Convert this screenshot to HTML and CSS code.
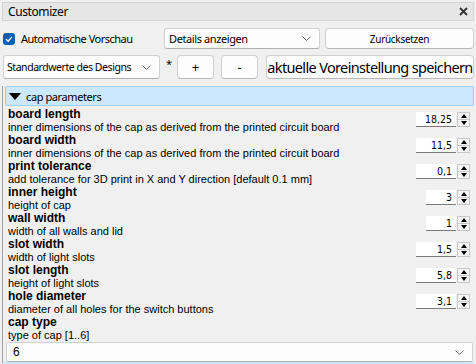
FILE: index.html
```html
<!DOCTYPE html>
<html>
<head>
<meta charset="utf-8">
<link rel="stylesheet" href="styles.css">
</head>
<body>
<div class="app">
  <div class="titlebar">
    <span class="title">Customizer</span>
    <svg class="close" width="9" height="9" viewBox="0 0 9 9"><path d="M1 1L8 8M8 1L1 8" stroke="#333" stroke-width="1.8"/></svg>
  </div>
  <div class="row1">
    <label class="check">
      <span class="box"><svg width="12" height="12" viewBox="0 0 12 12"><path d="M3 6.2L5.1 8.2L9 3.9" fill="none" stroke="#fff" stroke-width="1.3"/></svg></span>
      <span>Automatische Vorschau</span>
    </label>
    <div class="combo details"><span>Details anzeigen</span><svg class="chev" width="9" height="5" viewBox="0 0 9 5"><path d="M0.5 0.5L4.5 4.5L8.5 0.5" fill="none" stroke="#666" stroke-width="1"/></svg></div>
    <div class="btn reset">Zurücksetzen</div>
  </div>
  <div class="row2">
    <div class="combo preset"><span>Standardwerte des Designs</span><svg class="chev" width="9" height="5" viewBox="0 0 9 5"><path d="M0.5 0.5L4.5 4.5L8.5 0.5" fill="none" stroke="#666" stroke-width="1"/></svg></div>
    <span class="star">*</span>
    <div class="btn small">+</div>
    <div class="btn small">-</div>
    <div class="btn save">aktuelle Voreinstellung speichern</div>
  </div>
  <div class="group">
    <div class="header">
      <svg class="tri" width="12" height="7" viewBox="0 0 12 7"><path d="M0 0H12L6 7Z" fill="#000"/></svg>
      <span>cap parameters</span>
    </div>
    <div class="params">
      <div class="param">
        <div class="name">board length</div>
        <div class="desc">inner dimensions of the cap as derived from the printed circuit board</div>
        <div class="spin"><div class="field wide">18,25</div><div class="arrows"><span class="up"></span><span class="down"></span></div></div>
      </div>
      <div class="param">
        <div class="name">board width</div>
        <div class="desc">inner dimensions of the cap as derived from the printed circuit board</div>
        <div class="spin"><div class="field wide">11,5</div><div class="arrows"><span class="up"></span><span class="down"></span></div></div>
      </div>
      <div class="param">
        <div class="name">print tolerance</div>
        <div class="desc">add tolerance for 3D print in X and Y direction [default 0.1 mm]</div>
        <div class="spin"><div class="field wide">0,1</div><div class="arrows"><span class="up"></span><span class="down"></span></div></div>
      </div>
      <div class="param">
        <div class="name">inner height</div>
        <div class="desc">height of cap</div>
        <div class="spin"><div class="field narrow">3</div><div class="arrows"><span class="up"></span><span class="down"></span></div></div>
      </div>
      <div class="param">
        <div class="name">wall width</div>
        <div class="desc">width of all walls and lid</div>
        <div class="spin"><div class="field narrow">1</div><div class="arrows"><span class="up"></span><span class="down"></span></div></div>
      </div>
      <div class="param">
        <div class="name">slot width</div>
        <div class="desc">width of light slots</div>
        <div class="spin"><div class="field wide">1,5</div><div class="arrows"><span class="up"></span><span class="down"></span></div></div>
      </div>
      <div class="param">
        <div class="name">slot length</div>
        <div class="desc">height of light slots</div>
        <div class="spin"><div class="field wide">5,8</div><div class="arrows"><span class="up"></span><span class="down"></span></div></div>
      </div>
      <div class="param">
        <div class="name">hole diameter</div>
        <div class="desc">diameter of all holes for the switch buttons</div>
        <div class="spin"><div class="field wide">3,1</div><div class="arrows"><span class="up"></span><span class="down"></span></div></div>
      </div>
      <div class="param">
        <div class="name">cap type</div>
        <div class="desc">type of cap [1..6]</div>
      </div>
      <div class="combo captype"><span>6</span><svg class="chev" width="9" height="5" viewBox="0 0 9 5"><path d="M0.5 0.5L4.5 4.5L8.5 0.5" fill="none" stroke="#666" stroke-width="1"/></svg></div>
    </div>
  </div>
</div>
</body>
</html>
```
FILE: styles.css
```css
html, body {
  margin: 0;
  padding: 0;
}
body {
  width: 476px;
  height: 364px;
  overflow: hidden;
  background: #f0f0f0;
  font-family: "Noto Sans", "Liberation Sans", sans-serif;
  color: #000;
  white-space: nowrap;
}
.app {
  display: flex;
  flex-direction: column;
  padding: 2px 2px 0 2px;
}
.titlebar {
  height: 17px;
  border: 1px solid #d4d4d4;
  background: #e6e6e6;
  display: flex;
  align-items: center;
  justify-content: space-between;
  padding: 0 5px 0 5px;
}
.title {
  font-size: 12px;
  letter-spacing: -0.4px;
}
.close {
  display: block;
}
.row1 {
  margin-top: 7px;
  height: 21px;
  display: flex;
  align-items: center;
}
.check {
  display: flex;
  align-items: center;
  width: 161px;
  padding-left: 1px;
  font-size: 11px;
  letter-spacing: -0.5px;
}
.box {
  width: 12px;
  height: 12px;
  border-radius: 3px;
  background: #005fb8;
  margin-right: 6px;
  display: flex;
}
.combo {
  box-sizing: border-box;
  background: #fdfdfd;
  border: 1px solid #d0d0d0;
  border-bottom-color: #b0b0b0;
  border-radius: 3px;
  display: flex;
  align-items: center;
  justify-content: space-between;
  font-size: 11px;
  letter-spacing: -0.4px;
  padding: 0 8px 0 4px;
}
.btn {
  box-sizing: border-box;
  background: #fdfdfd;
  border: 1px solid #d0d0d0;
  border-bottom-color: #b8b8b8;
  border-radius: 4px;
  display: flex;
  align-items: center;
  justify-content: center;
  font-size: 11px;
}
.details {
  width: 156px;
  height: 21px;
}
.reset {
  margin-left: 5px;
  width: 149px;
  height: 21px;
  font-size: 10px;
  letter-spacing: -0.3px;
}
.row2 {
  margin-top: 6px;
  height: 24px;
  display: flex;
  align-items: center;
}
.preset {
  margin-left: 1px;
  width: 157px;
  height: 24px;
  padding-left: 3px;
  font-size: 10.5px;
  letter-spacing: -0.45px;
}
.star {
  width: 16px;
  text-align: center;
  align-self: flex-start;
  font-size: 11px;
  margin-top: 1px;
  margin-left: 1px;
}
.small {
  width: 37px;
  height: 24px;
  margin-right: 7px;
  font-size: 13px;
}
.save {
  margin-left: 1px;
  flex: 1;
  height: 24px;
  font-size: 14.5px;
  letter-spacing: -0.65px;
}
.group {
  margin-top: 7px;
  border-left: 1px solid #a0a0a0;
  border-bottom: 2px solid #cce8ff;
  display: flex;
  flex-direction: column;
  height: 276px;
}
.header {
  margin-left: 2px;
  height: 18px;
  border: 1px solid #99d1ff;
  border-radius: 2px;
  background: #cce8ff;
  display: flex;
  align-items: center;
  font-size: 11px;
  letter-spacing: -0.4px;
}
.tri {
  margin-left: 3px;
  margin-right: 5px;
}
.params {
  padding: 2px 0 0 5px;
  display: flex;
  flex-direction: column;
}
.param {
  display: grid;
  grid-template-columns: 1fr auto;
  grid-template-rows: 13px 13px;
  font-family: "Liberation Sans", sans-serif;
}
.name {
  grid-column: 1;
  grid-row: 1;
  font-weight: bold;
  font-size: 12px;
  line-height: 13px;
}
.desc {
  grid-column: 1;
  grid-row: 2;
  font-size: 11px;
  line-height: 13px;
}
.spin {
  grid-column: 2;
  grid-row: 1 / 3;
  display: flex;
  align-items: stretch;
  height: 15px;
  margin-top: 4px;
  margin-right: 4px;
}
.field {
  box-sizing: border-box;
  background: #fff;
  border-bottom: 1px solid #7a7a7a;
  text-align: right;
  line-height: 15px;
  padding-right: 4px;
  font-family: "DejaVu Sans Condensed", "DejaVu Sans", sans-serif;
  font-size: 10.5px;
}
.wide { width: 40px; }
.narrow { width: 30px; }
.arrows {
  box-sizing: border-box;
  width: 13px;
  margin-left: 1px;
  border: 1px solid #c8c8c8;
  background: #f6f6f6;
  display: flex;
  flex-direction: column;
}
.up, .down {
  flex: 1;
  display: flex;
  align-items: center;
  justify-content: center;
}
.up {
  border-bottom: 1px solid #c8c8c8;
}
.up::before {
  content: "";
  border-left: 3px solid transparent;
  border-right: 3px solid transparent;
  border-bottom: 4px solid #000;
}
.down::before {
  content: "";
  border-left: 3px solid transparent;
  border-right: 3px solid transparent;
  border-top: 4px solid #000;
}
.captype {
  margin-left: -2px;
  margin-right: 1px;
  height: 20px;
  font-family: "Liberation Sans", sans-serif;
  font-size: 12px;
  letter-spacing: 0;
  padding-left: 6px;
  border-radius: 2px;
}
```
